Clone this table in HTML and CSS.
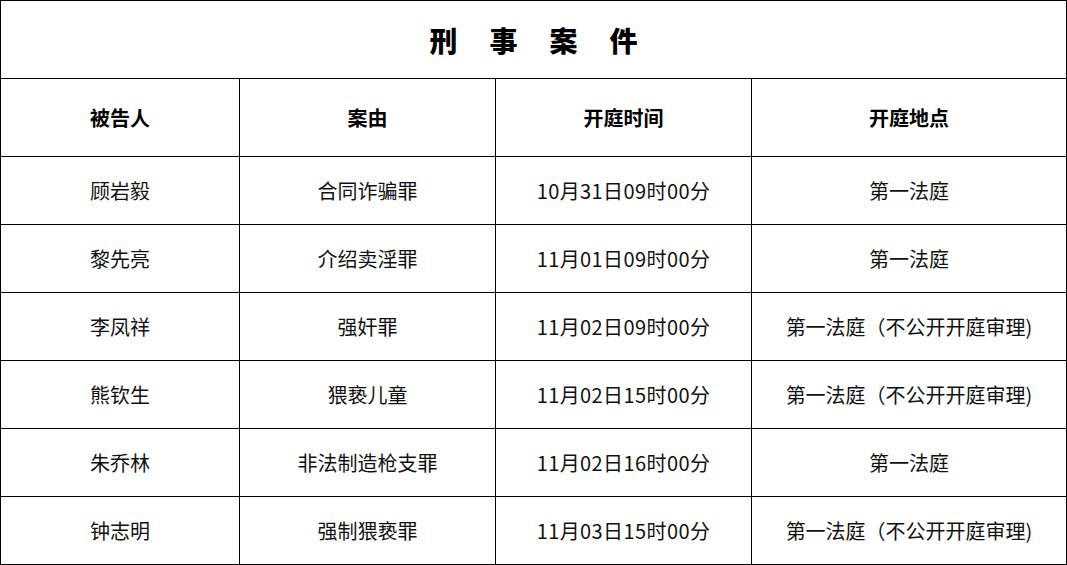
FILE: index.html
```html
<!DOCTYPE html>
<html lang="zh-CN">
<head>
<meta charset="utf-8">
<title>刑事案件</title>
<link rel="stylesheet" href="styles.css">
</head>
<body>
<table class="docket">
  <colgroup>
    <col class="c1"><col class="c2"><col class="c3"><col class="c4">
  </colgroup>
  <tr class="title-row"><td colspan="4" class="title">刑事案件</td></tr>
  <tr class="head-row"><th>被告人</th><th>案由</th><th>开庭时间</th><th>开庭地点</th></tr>
  <tr class="row"><td>顾岩毅</td><td>合同诈骗罪</td><td class="time">10月31日09时00分</td><td>第一法庭</td></tr>
  <tr class="row"><td>黎先亮</td><td>介绍卖淫罪</td><td class="time">11月01日09时00分</td><td>第一法庭</td></tr>
  <tr class="row"><td>李凤祥</td><td>强奸罪</td><td class="time">11月02日09时00分</td><td>第一法庭（不公开开庭审理)</td></tr>
  <tr class="row"><td>熊钦生</td><td>猥亵儿童</td><td class="time">11月02日15时00分</td><td>第一法庭（不公开开庭审理)</td></tr>
  <tr class="row"><td>朱乔林</td><td>非法制造枪支罪</td><td class="time">11月02日16时00分</td><td>第一法庭</td></tr>
  <tr class="row"><td>钟志明</td><td>强制猥亵罪</td><td class="time">11月03日15时00分</td><td>第一法庭（不公开开庭审理)</td></tr>
</table>
</body>
</html>
```
FILE: styles.css
```css
html, body {
  margin: 0;
  padding: 0;
  background: #fff;
}
body {
  font-family: "Noto Sans CJK SC", "Noto Sans", sans-serif;
  color: #111;
}
.docket {
  border-collapse: collapse;
  table-layout: fixed;
  width: 1066px;
}
.c1 { width: 239px; }
.c2 { width: 256px; }
.c3 { width: 256px; }
.c4 { width: 315px; }
.docket td, .docket th {
  border: 1px solid #000;
  padding: 0;
  text-align: center;
  vertical-align: middle;
}
.title-row td { height: 77px; }
.title {
  font-size: 28px;
  font-weight: 900;
  letter-spacing: 32px;
  text-indent: 32px;
  color: #000;
  padding-bottom: 3px;
}
.head-row th {
  height: 77px;
  font-size: 20px;
  font-weight: 700;
  color: #000;
}
.row td {
  height: 67px;
  font-size: 20px;
  font-weight: 400;
}
.row td.time {
  letter-spacing: 0.4px;
}
```
